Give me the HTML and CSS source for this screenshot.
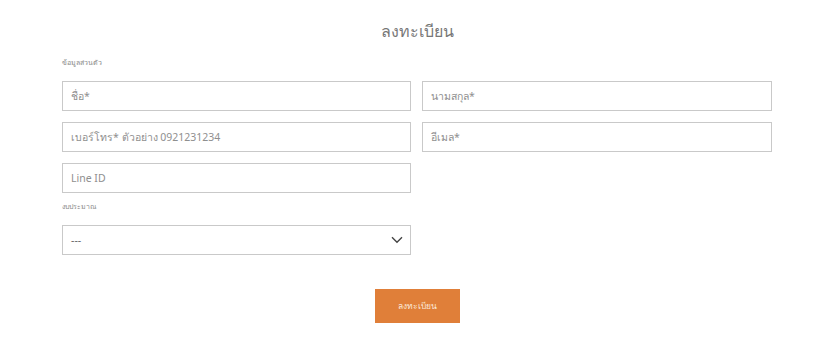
FILE: index.html
```html
<!DOCTYPE html>
<html lang="th">
<head>
<meta charset="utf-8">
<link rel="stylesheet" href="styles.css">
</head>
<body>
<main class="page">
  <h1 class="title">ลงทะเบียน</h1>
  <div class="section-label">ข้อมูลส่วนตัว</div>
  <div class="grid">
    <div class="field"><span class="ph">ชื่อ*</span></div>
    <div class="field"><span class="ph">นามสกุล*</span></div>
    <div class="field"><span class="ph">เบอร์โทร* ตัวอย่าง 0921231234</span></div>
    <div class="field"><span class="ph">อีเมล*</span></div>
    <div class="field"><span class="ph">Line ID</span></div>
  </div>
  <div class="section-label budget">งบประมาณ</div>
  <div class="grid">
    <div class="field select">
      <span class="ph dark">---</span>
      <svg class="chev" width="12" height="8" viewBox="0 0 12 8"><path d="M1 1.2 L6 6.2 L11 1.2" fill="none" stroke="#444" stroke-width="1.4"/></svg>
    </div>
  </div>
  <div class="actions"><button class="btn">ลงทะเบียน</button></div>
</main>
</body>
</html>
```
FILE: styles.css
```css
html, body { margin: 0; padding: 0; background: #fff; }
body { font-family: "Noto Sans", "Liberation Sans", sans-serif; color: #666; }
.page { width: 710px; padding: 17px 0 0 62px; box-sizing: content-box; }
.title { margin: 0; text-align: center; font-size: 16px; font-weight: 400; color: #777; line-height: 28px; }
.section-label { font-size: 7px; color: #888; margin-top: 13px; line-height: 10px; }
.section-label.budget { margin-top: 9px; }
.grid { display: grid; grid-template-columns: 349px 350px; column-gap: 11px; row-gap: 11px; margin-top: 13px; }
.field { height: 30px; box-sizing: border-box; border: 1.5px solid #c9c9c9; display: flex; align-items: center; padding: 0 8px; }
.ph { font-size: 10.5px; color: #8f8f8f; }
.ph.dark { color: #666; }
.select { justify-content: space-between; padding-right: 7px; }
.actions { display: flex; justify-content: center; margin-top: 34px; }
.btn { width: 85px; height: 34px; border: none; background: #e07f39; color: #fbe8d8; font-family: inherit; font-size: 8.5px; padding: 0; }
```
